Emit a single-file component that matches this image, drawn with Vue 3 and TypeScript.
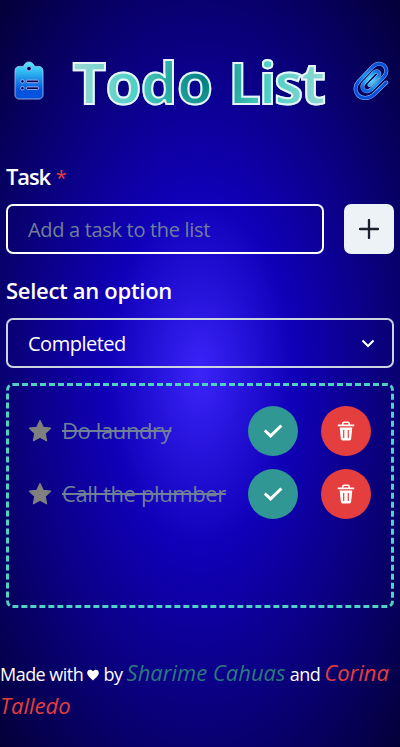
<script setup lang="ts">
import { ref } from 'vue'

interface Task {
  id: number
  name: string
}

const draft = ref('')
const option = ref('Completed')
const tasks = ref<Task[]>([
  { id: 1, name: 'Do laundry' },
  { id: 2, name: 'Call the plumber' },
])

function addTask(): void {
  const name = draft.value.trim()
  if (!name) return
  tasks.value.push({ id: Date.now(), name })
  draft.value = ''
}

function removeTask(id: number): void {
  tasks.value = tasks.value.filter((task) => task.id !== id)
}
</script>

<template>
  <main class="page">
    <header class="header">
      <svg class="clipboard" width="30" height="39" viewBox="0 0 30 39">
        <defs>
          <linearGradient id="clipFill" x1="0" y1="0" x2="0" y2="1">
            <stop offset="0" stop-color="#4ff0ff" />
            <stop offset="0.45" stop-color="#1c93ea" />
            <stop offset="0.75" stop-color="#0453df" />
            <stop offset="1" stop-color="#0453df" />
          </linearGradient>
        </defs>
        <path
          fill="url(#clipFill)"
          fill-rule="evenodd"
          stroke="#b4c6ee"
          stroke-width="0.8"
          d="M5.2 5.4H8.7C9.5 5.4 9.8 4.7 10.3 3.8C11.3 2 12.9 1 15 1S18.700 2 19.700 3.800C20.200 4.700 20.500 5.400 21.300 5.400H24.800C27.300 5.400 29 7.100 29 9.600V33.800C29 36.300 27.300 38 24.800 38H5.200C2.700 38 1 36.300 1 33.800V9.600C1 7.100 2.700 5.400 5.200 5.400ZM15 5.300A2.300 2.300 0 1 0 15 9.900A2.300 2.300 0 1 0 15 5.300ZM8.400 18.600A1.800 1.800 0 1 0 8.400 22.200A1.800 1.800 0 1 0 8.400 18.600ZM8.400 25.400A1.800 1.800 0 1 0 8.400 29A1.800 1.800 0 1 0 8.400 25.400ZM13.700 19.100H23.300A1.300 1.300 0 0 1 23.300 21.700H13.700A1.300 1.300 0 0 1 13.700 19.100ZM13.700 25.900H23.300A1.300 1.300 0 0 1 23.300 28.500H13.700A1.300 1.300 0 0 1 13.700 25.900Z"
        />
      </svg>
      <h1 class="title"><span class="word-todo">Todo</span> <span class="word-list">List</span></h1>
      <svg class="paperclip" width="36" height="39" viewBox="0 0 36 39">
        <defs>
          <radialGradient id="wireFill" gradientUnits="userSpaceOnUse" cx="18" cy="19" r="17">
            <stop offset="0" stop-color="#4ff0ff" />
            <stop offset="0.5" stop-color="#1687e8" />
            <stop offset="0.8" stop-color="#0450dd" />
          </radialGradient>
        </defs>
        <g fill="none" stroke-linecap="round" stroke-linejoin="round">
          <path
            stroke="#9bb8ee"
            stroke-width="4"
            d="M33.300 21.500L20.500 33.800C15.500 38.300 8.200 37.900 4.600 33.600C1.300 29.300 2.200 24.300 5.500 20.700L19.700 5.700C23.200 2.200 28 1.700 31.200 4.700C34.300 7.700 34 12.600 30.700 15.900L18.100 28.600C15.800 30.700 12.600 30.900 10.700 28.900C8.800 26.900 9.100 24 11.200 21.800L20.900 11.600Q23.400 9.300 25.500 11.200Q27.200 13.100 25 15.500L16.500 24"
          />
          <path
            stroke="url(#wireFill)"
            stroke-width="3"
            d="M33.300 21.500L20.500 33.800C15.500 38.300 8.200 37.900 4.600 33.600C1.300 29.300 2.200 24.300 5.500 20.700L19.700 5.700C23.200 2.200 28 1.700 31.200 4.700C34.300 7.700 34 12.600 30.700 15.900L18.100 28.600C15.800 30.700 12.600 30.900 10.700 28.900C8.800 26.900 9.100 24 11.200 21.800L20.900 11.600Q23.400 9.300 25.500 11.200Q27.200 13.100 25 15.500L16.500 24"
          />
        </g>
      </svg>
    </header>

    <form class="form" @submit.prevent="addTask">
      <label class="label label-task" for="task">Task <span class="required">*</span></label>
      <div class="entry">
        <input id="task" v-model="draft" class="field" type="text" placeholder="Add a task to the list" />
        <button class="add" type="submit" aria-label="Add">
          <svg width="20" height="20" viewBox="0 0 20 20">
            <path d="M10 1V19M1 10H19" fill="none" stroke="#1a202c" stroke-width="2.300" stroke-linecap="round" />
          </svg>
        </button>
      </div>
      <label class="label">Select an option</label>
      <button class="select" type="button">
        <span>{{ option }}</span>
        <svg width="14" height="9" viewBox="0 0 14 9">
          <path d="M1.500 1.500L7 7L12.500 1.500" fill="none" stroke="#fff" stroke-width="2.200" />
        </svg>
      </button>
    </form>

    <ul class="list">
      <li v-for="task in tasks" :key="task.id" class="item">
        <svg class="star" width="24" height="24" viewBox="0 0 24 24">
          <path
            d="M12 1.500L15.200 8.300L22.500 9.200L17.200 14.300L18.600 21.800L12 18.200L5.400 21.800L6.800 14.300L1.500 9.200L8.800 8.300Z"
            fill="#808080"
            stroke="#808080"
            stroke-width="1.200"
            stroke-linejoin="round"
          />
        </svg>
        <span class="name">{{ task.name }}</span>
        <button class="round done" type="button" aria-label="Done">
          <svg width="20" height="16" viewBox="0 0 20 16">
            <path d="M1.800 7.500L7.600 12.900L18.400 2.500" fill="none" stroke="#fff" stroke-width="2.900" />
          </svg>
        </button>
        <button class="round remove" type="button" aria-label="Delete" @click="removeTask(task.id)">
          <svg width="18" height="20" viewBox="0 0 18 20">
            <path d="M5.800 4V2.500Q5.800 1.200 7.100 1.200H10.900Q12.200 1.200 12.200 2.500V4" fill="none" stroke="#fff" stroke-width="1.500" />
            <path
              fill="#fff"
              fill-rule="evenodd"
              d="M.8 3.600H17.200V5.300H.8ZM2.700 6.500H15.300L14.100 18Q13.900 19.400 12.500 19.400H5.500Q4.100 19.400 3.900 18ZM6.100 9V17H7.300V9ZM10.700 9V17H11.900V9Z"
            />
          </svg>
        </button>
      </li>
    </ul>

    <footer class="footer">
      Made with
      <svg class="heart" width="12" height="12" viewBox="0 0 12 12">
        <path d="M6 11.500C4 9.500 .2 7 .2 3.800C.2 .4 4.200-.4 6 2.300C7.800-.4 11.800 .4 11.800 3.800C11.800 7 8 9.500 6 11.500Z" fill="#fff" />
      </svg>
      by <em class="author teal">Sharime Cahuas</em> and <em class="author red">Corina</em><br />
      <em class="author red">Talledo</em>
    </footer>
  </main>
</template>

<style>
body {
  margin: 0;
}
</style>

<style scoped>
* {
  box-sizing: border-box;
}

.page {
  height: 747px;
  overflow: hidden;
  background: radial-gradient(ellipse at center, #3a24f9 0%, #1000b8 33%, #030038 100%);
  color: #fff;
  font-family: 'Open Sans', 'Noto Sans', sans-serif;
}

button {
  padding: 0;
  border: 0;
  font: inherit;
  color: inherit;
  display: flex;
  align-items: center;
  justify-content: center;
  flex: none;
}

.header {
  display: flex;
  justify-content: space-between;
  align-items: center;
  padding: 40px 11px 0 14px;
  height: 121px;
}

.title {
  margin: 3px -8px 0 0;
  width: 260px;
  font-size: 58px;
  line-height: 80px;
  font-weight: 740;
  white-space: nowrap;
  color: transparent;
  background: radial-gradient(circle at center, #008080 0%, #4fd1c5 50%, #a0d8d8 100%);
  background-clip: text;
  -webkit-background-clip: text;
  -webkit-text-stroke: 2px #e8f3fa;
}

.word-todo {
  letter-spacing: -0.6px;
}

.word-list {
  margin-left: 1px;
  letter-spacing: -2.3px;
}

.form {
  padding: 40px 6px 0;
}

.label {
  display: block;
  height: 30px;
  line-height: 30px;
  font-size: 22px;
  font-weight: 600;
  letter-spacing: -0.3px;
}

.label-task {
  letter-spacing: -1.1px;
}

.required {
  margin-left: 1px;
  color: #e53e3e;
  font-size: 20px;
  font-weight: 400;
}

.entry {
  display: flex;
  gap: 20px;
  margin: 13px 0 21px;
}

.field {
  flex: 1;
  min-width: 0;
  height: 50px;
  padding: 0 20px;
  border: 2px solid #fff;
  border-radius: 7px;
  background: transparent;
  font: 400 20px 'Open Sans', sans-serif;
  letter-spacing: -0.32px;
  color: #fff;
}

.field::placeholder {
  color: #718096;
  opacity: 1;
}

.add {
  width: 50px;
  height: 50px;
  border-radius: 7px;
  background: #edf2f7;
}

.select {
  width: 100%;
  height: 50px;
  margin-top: 13px;
  padding: 0 17px 0 20px;
  border: 2px solid #cbd5e0;
  border-radius: 7px;
  background: transparent;
  justify-content: space-between;
  font-size: 20px;
  letter-spacing: -0.5px;
}

.list {
  list-style: none;
  margin: 15px 6px 0;
  height: 225px;
  padding: 20px 20px 0 19px;
  border: 3px dashed #4fd1c5;
  border-radius: 7px;
}

.item {
  display: flex;
  align-items: center;
  height: 50px;
  margin-bottom: 13px;
}

.star {
  flex: none;
}

.name {
  flex: 1;
  margin: -2px 0 0 10px;
  font-size: 22px;
  line-height: 30px;
  letter-spacing: -0.38px;
  white-space: nowrap;
  color: #718096;
  text-decoration: line-through;
  text-decoration-thickness: 2px;
}

.round {
  width: 50px;
  height: 50px;
  border-radius: 50%;
}

.done {
  background: #319795;
  margin-right: 23px;
}

.remove {
  background: #e53e3e;
}

.footer {
  padding-top: 50px;
  font-size: 18px;
  line-height: 33px;
  letter-spacing: -0.53px;
  white-space: nowrap;
}

.author {
  font-size: 22px;
  line-height: 1;
  letter-spacing: 0;
}

.teal {
  color: #2c7a7b;
}

.red {
  color: #e53e3e;
}
</style>
